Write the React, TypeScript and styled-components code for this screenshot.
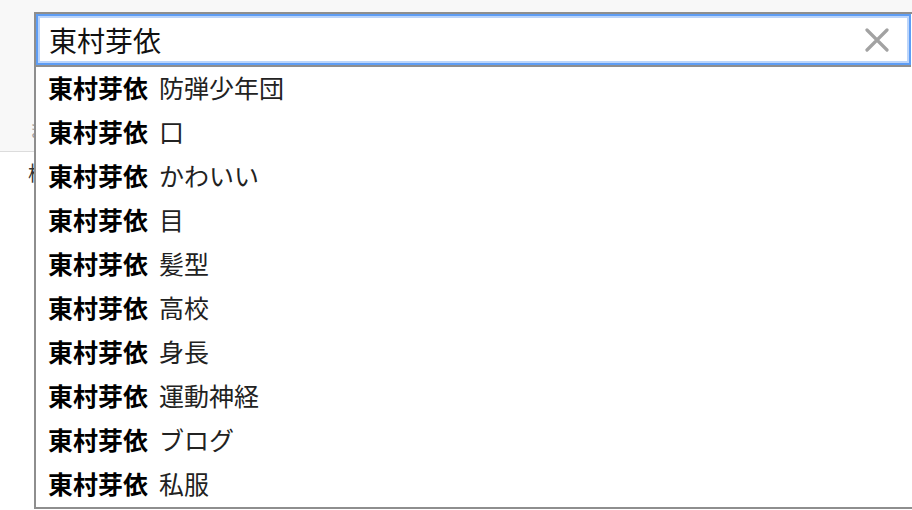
import React from "react";
import styled, { createGlobalStyle } from "styled-components";

const GlobalStyle = createGlobalStyle`
  html, body {
    margin: 0;
    padding: 0;
    background: #ffffff;
    overflow: hidden;
  }
  body {
    font-family: "Noto Sans CJK JP", "Noto Sans", sans-serif;
  }
`;

const Page = styled.div`
  position: relative;
  width: 912px;
  height: 510px;
  overflow: hidden;
  background: #ffffff;
`;

const Header = styled.div`
  height: 152px;
  box-sizing: border-box;
  background: #f8f8f8;
  border-bottom: 1px solid #dcdcdc;
  padding: 117px 0 0 29px;
`;

const HeaderHint = styled.div`
  font-size: 18px;
  line-height: 24px;
  color: #a0a0a0;
`;

const BodyText = styled.div`
  padding: 9px 0 0 28px;
  font-size: 20px;
  line-height: 24px;
  color: #333;
`;

const Dropdown = styled.div`
  position: absolute;
  top: 12px;
  left: 34px;
  width: 900px;
  background: #ffffff;
  border-top: 2px solid #8e8e8e;
  border-left: 2px solid #8e8e8e;
  border-bottom: 2px solid #8e8e8e;
`;

const InputBar = styled.div`
  position: relative;
  width: 875px;
  height: 51px;
  border-bottom: 2px solid #8e8e8e;
`;

const SearchInput = styled.input`
  display: block;
  box-sizing: border-box;
  width: 100%;
  height: 100%;
  margin: 0;
  border: 0;
  outline: none;
  padding: 0 50px 0 13px;
  background: #ffffff;
  box-shadow: inset 0 0 0 2px #5e9df4, inset 0 0 0 4px #bcd5fa;
  font-family: "Noto Sans CJK JP", "Noto Sans", sans-serif;
  font-size: 28px;
  color: #111;
`;

const ClearButton = styled.button`
  position: absolute;
  top: 14px;
  right: 22px;
  width: 24px;
  height: 24px;
  padding: 0;
  margin: 0;
  border: 0;
  background: transparent;
  display: flex;
  align-items: center;
  justify-content: center;
`;

const List = styled.ul`
  list-style: none;
  margin: 0;
  padding: 0;
`;

const Row = styled.li`
  box-sizing: border-box;
  height: 44px;
  display: flex;
  align-items: center;
  gap: 11px;
  padding: 0 0 5px 12px;
  font-size: 25px;
  line-height: 30px;
  color: #222;
  white-space: nowrap;
`;

const Query = styled.span`
  font-weight: 700;
  color: #000;
`;

const Suffix = styled.span`
  font-weight: 400;
  color: #222;
`;

const suggestions = [
  "防弾少年団",
  "口",
  "かわいい",
  "目",
  "髪型",
  "高校",
  "身長",
  "運動神経",
  "ブログ",
  "私服",
];

export default function App() {
  const query = "東村芽依";
  return (
    <>
      <GlobalStyle />
      <Page>
        <Header>
          <HeaderHint>ま</HeaderHint>
        </Header>
        <BodyText>検</BodyText>
        <Dropdown>
          <InputBar>
            <SearchInput readOnly value={query} />
            <ClearButton aria-label="clear">
              <svg width="24" height="24" viewBox="0 0 24 24">
                <path
                  d="M2 2 L22 22 M22 2 L2 22"
                  stroke="#a2a2a2"
                  strokeWidth="3.2"
                  strokeLinecap="round"
                  fill="none"
                />
              </svg>
            </ClearButton>
          </InputBar>
          <List>
            {suggestions.map((s) => (
              <Row key={s}>
                <Query>{query}</Query>
                <Suffix>{s}</Suffix>
              </Row>
            ))}
          </List>
        </Dropdown>
      </Page>
    </>
  );
}
